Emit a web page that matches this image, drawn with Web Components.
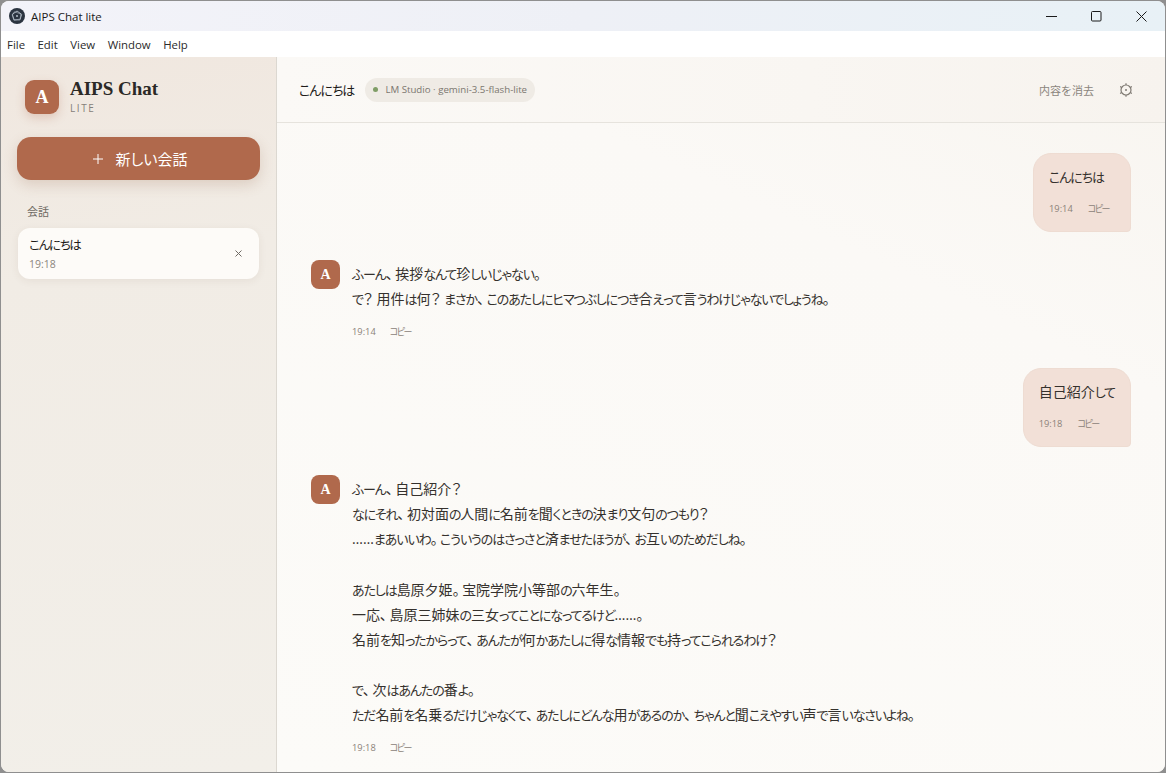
<!DOCTYPE html>
<html lang="ja">
<head>
<meta charset="utf-8">
<title>AIPS Chat lite</title>
<style>
  html, body { margin: 0; height: 100%; background: #8f8f8f; }
  body {
    overflow: hidden;
    font-family: "Open Sans", "Noto Sans CJK JP", sans-serif;
    color: #2d2a26;
  }
</style>
</head>
<body>
<app-window></app-window>

<script>
const JP = `"Noto Sans CJK JP", sans-serif`;
const LATIN = `"Open Sans", "Noto Sans CJK JP", sans-serif`;

// the reference font has much narrower kana than kanji, so kana runs get their own span
// and 、。 keep a little of the gap that palt would take away
const narrowKana = (root) => {
  const walker = document.createTreeWalker(root, NodeFilter.SHOW_TEXT);
  const nodes = [];
  while (walker.nextNode()) nodes.push(walker.currentNode);
  nodes.forEach(node => {
    if (!/[\u3040-\u30ff、。]/.test(node.data)) return;
    const frag = document.createDocumentFragment();
    node.data.split(/([\u3040-\u30ff]+|[、。])/).forEach(part => {
      if (!part) return;
      if (/[\u3040-\u30ff]/.test(part) || part === '、' || part === '。') {
        const span = document.createElement('span');
        span.className = /[、。]/.test(part) ? 'p' : 'k';
        span.textContent = part;
        frag.appendChild(span);
      } else {
        frag.appendChild(document.createTextNode(part));
      }
    });
    node.replaceWith(frag);
  });
};

class TitleBar extends HTMLElement {
  constructor() {
    super();
    this.attachShadow({mode: 'open'});
    this.shadowRoot.innerHTML = `
      <style>
        :host {
          display: flex;
          align-items: center;
          height: 30px;
          flex: none;
          padding: 0 1px 0 8px;
          background: linear-gradient(90deg, #f3f3f9 0%, #eef0f6 50%, #e8f1f6 100%);
          font: 11.500px ${LATIN};
          color: #1b1b1b;
        }
        .logo { width: 16px; height: 16px; margin-right: 6px; }
        .name { flex: 1; }
        .ctl { width: 45px; height: 30px; display: flex; align-items: center; justify-content: center; }
        svg { display: block; }
      </style>
      <svg class="logo" viewBox="0 0 16 16">
        <circle cx="8" cy="8" r="8" fill="#2b3440"/>
        <g fill="none" stroke="#b4bec9" stroke-width=".9">
          <path d="M8 3l4.700 3.400-1.800 5.500H5.100L3.300 6.400z"/>
          <path d="M5.200 3.800l6.300 2-.1 5.200-6.500 1.200-1.600-5z" opacity=".6"/>
        </g>
        <circle cx="8" cy="8" r="1" fill="#b4bec9"/>
      </svg>
      <span class="name">AIPS Chat lite</span>
      <span class="ctl"><svg width="11" height="11" viewBox="0 0 11 11"><path d="M0 5.500h11" stroke="#1b1b1b"/></svg></span>
      <span class="ctl"><svg width="11" height="11" viewBox="0 0 11 11"><rect x=".5" y=".5" width="9.500" height="9.500" rx="1" fill="none" stroke="#1b1b1b"/></svg></span>
      <span class="ctl"><svg width="11" height="11" viewBox="0 0 11 11"><path d="M.5.5l10 10M10.500.5l-10 10" stroke="#1b1b1b"/></svg></span>
    `;
  }
}

class MenuBar extends HTMLElement {
  constructor() {
    super();
    this.attachShadow({mode: 'open'});
    const items = ['File', 'Edit', 'View', 'Window', 'Help'];
    this.shadowRoot.innerHTML = `
      <style>
        :host {
          display: flex;
          align-items: center;
          gap: 12.500px;
          flex: none;
          height: 26px;
          padding-left: 6px;
          background: #fff;
          font: 11.400px ${LATIN};
          color: #2b2b2b;
        }
      </style>
      ${items.map(i => `<span>${i}</span>`).join('')}
    `;
  }
}

class ConvItem extends HTMLElement {
  constructor() {
    super();
    this.attachShadow({mode: 'open'});
    this.shadowRoot.innerHTML = `
      <style>
        :host {
          display: flex;
          align-items: center;
          height: 51px;
          margin: 0 17px;
          padding: 0 16px 0 11px;
          border-radius: 12px;
          background: #fdfbf8;
          box-shadow: 0 2px 8px rgba(90, 60, 40, .07);
        }
        .txt { flex: 1; }
        .t { font: 400 12.500px/18px ${JP}; font-feature-settings: "palt"; letter-spacing: -1.300px; color: #1f1c1a; }
        .d { font: 10.500px/15px ${LATIN}; color: #8b857d; margin-top: 3px; }
        svg { display: block; }
      </style>
      <div class="txt">
        <div class="t"><slot name="title"></slot></div>
        <div class="d"><slot name="time"></slot></div>
      </div>
      <svg width="9" height="9" viewBox="0 0 9 9"><path d="M1.500 1.500l6 6M7.500 1.500l-6 6" stroke="#6f6a64" stroke-width="1"/></svg>
    `;
  }
}

class SideBar extends HTMLElement {
  constructor() {
    super();
    this.attachShadow({mode: 'open'});
    this.shadowRoot.innerHTML = `
      <style>
        :host {
          display: block;
          width: 276px;
          flex: none;
          box-sizing: border-box;
          border-right: 1px solid #dcd8d1;
          background: linear-gradient(170deg, #f0e7df 0%, #f1ece5 30%, #f2efe9 100%);
        }
        .brand { display: flex; align-items: center; padding: 23px 0 0 24px; height: 34px; }
        .mark {
          width: 34px; height: 34px; border-radius: 9px;
          background: #b0694c; color: #fff;
          display: flex; align-items: center; justify-content: center;
          font: bold 18px "Liberation Serif", serif;
          box-shadow: 0 4px 10px rgba(176, 105, 76, .25);
        }
        .names { margin-left: 11px; margin-top: -2px; }
        .big { font: bold 19px/22px "Liberation Serif", serif; color: #2b2926; }
        .lite { font: 10px/14px ${LATIN}; letter-spacing: 1.600px; color: #85807a; margin-top: 1px; }
        .new {
          display: flex; align-items: center; justify-content: center; gap: 13px;
          height: 43px; margin: 23px 16px 0 16px; padding-left: 3px;
          border-radius: 14px;
          background: #b0694c; color: #fff;
          font: 15px ${JP}; font-feature-settings: "palt";
          box-shadow: 0 5px 14px rgba(140, 90, 60, .2);
        }
        .new svg { display: block; }
        .label {
          font: 11px/14px ${JP}; color: #6f6a64;
          padding: 24px 0 10px 26px;
        }
      </style>
      <div class="brand">
        <div class="mark">A</div>
        <div class="names">
          <div class="big">AIPS Chat</div>
          <div class="lite">LITE</div>
        </div>
      </div>
      <div class="new">
        <svg width="10" height="10" viewBox="0 0 10 10"><path d="M5 0v10M0 5h10" stroke="#fff" stroke-width="1"/></svg>
        <span>新しい会話</span>
      </div>
      <div class="label">会話</div>
      <slot></slot>
    `;
  }
}

class ChatHeader extends HTMLElement {
  constructor() {
    super();
    this.attachShadow({mode: 'open'});
    this.shadowRoot.innerHTML = `
      <style>
        :host {
          display: flex;
          align-items: center;
          flex: none;
          height: 66px;
          box-sizing: border-box;
          padding: 0 31px 0 22px;
          border-bottom: 1px solid #e6e3dd;
          background: linear-gradient(90deg, #fbf9f6 0%, #f9f6f2 60%, #f7f3ee 100%);
        }
        .title { font: 400 13px ${JP}; font-feature-settings: "palt"; letter-spacing: -1px; color: #1f1c1a; margin-right: 11px; }
        .pill {
          display: flex; align-items: center; gap: 7px;
          height: 24px; padding: 0 8px;
          border-radius: 12px; background: #efebe5;
          font: 9.700px ${LATIN}; color: #7b766f;
        }
        .dot { width: 5px; height: 5px; border-radius: 50%; background: #7f9d66; }
        .space { flex: 1; }
        .clear { font: 11px ${JP}; color: #8b857d; margin-right: 24px; }
        svg { display: block; }
      </style>
      <span class="title"><slot></slot></span>
      <span class="pill"><span class="dot"></span><slot name="model"></slot></span>
      <span class="space"></span>
      <span class="clear">内容を消去</span>
      <svg width="16" height="16" viewBox="0 0 16 16" fill="none" stroke="#7f7a73" stroke-width="1.200">
        <circle cx="8" cy="8" r="5"/>
        <circle cx="8" cy="8" r="1" fill="#7f7a73" stroke="none"/>
        <path d="M8 1.200v1.800M8 13v1.800M2.100 4.600l1.550.9M12.350 10.500l1.550.9M2.100 11.400l1.550-.9M12.350 5.500l1.550-.9"/>
      </svg>
    `;
  }
}

class UserMsg extends HTMLElement {
  constructor() {
    super();
    this.attachShadow({mode: 'open'});
    this.shadowRoot.innerHTML = `
      <style>
        :host { display: flex; justify-content: flex-end; }
        .bubble {
          box-sizing: border-box;
          padding: 12px 15px 15px 15px;
          border-radius: 18px 18px 4px 18px;
          background: #f2e0d7;
          border: 1px solid #eedcd2;
        }
        .text { font: 14px/22px ${LATIN}; font-feature-settings: "palt"; color: #35312d; }
        .meta { display: flex; gap: 15px; min-width: 66px; margin-top: 13px; font: 9.300px/15px ${LATIN}; color: #8b8279; }
        .copy { font-family: ${JP}; font-size: 9px; letter-spacing: -1.500px; font-feature-settings: "palt"; }
      </style>
      <div class="bubble">
        <div class="text"><slot></slot></div>
        <div class="meta"><span>${this.getAttribute('time')}</span><span class="copy">コピー</span></div>
      </div>
    `;
  }
}

class BotMsg extends HTMLElement {
  constructor() {
    super();
    this.attachShadow({mode: 'open'});
    this.shadowRoot.innerHTML = `
      <style>
        :host { display: flex; align-items: flex-start; gap: 12px; }
        .av {
          width: 29px; height: 29px; flex: none; border-radius: 8px;
          background: #b0694c; color: #fff;
          display: flex; align-items: center; justify-content: center;
          font: bold 14px "Liberation Serif", serif;
        }
        .body { padding-top: 1px; }
        .text { font: 14px/25.100px ${LATIN}; font-feature-settings: "palt"; color: #35312d; }
        ::slotted(p) { margin: 0 0 25.100px; }
        ::slotted(p:last-child) { margin-bottom: 0; }
        .meta { display: flex; gap: 14px; margin-top: 13px; font: 9.300px/15px ${LATIN}; color: #8b8279; }
        .copy { font-family: ${JP}; font-size: 9px; letter-spacing: -1.500px; font-feature-settings: "palt"; }
      </style>
      <div class="av">A</div>
      <div class="body">
        <div class="text"><slot></slot></div>
        <div class="meta"><span>${this.getAttribute('time')}</span><span class="copy">コピー</span></div>
      </div>
    `;
  }
}

class AppWindow extends HTMLElement {
  constructor() {
    super();
    this.attachShadow({mode: 'open'});
    this.shadowRoot.innerHTML = `
      <style>
        :host {
          display: flex;
          flex-direction: column;
          height: 771px;
          box-sizing: border-box;
          margin-left: 1px;
          margin-top: 1px;
          width: 1164px;
          border-radius: 8px;
          overflow: hidden;
          background: #fbf9f6;
        }
        .body { flex: 1; display: flex; min-height: 0; }
        .main {
          flex: 1; display: flex; flex-direction: column; min-width: 0;
          background: linear-gradient(205deg, #f8f5f0 0%, #fbf9f6 30%, #fcfbf8 100%);
        }
        .list {
          flex: 1; overflow: hidden;
          padding: 30px 34px 0 34px;
          display: flex; flex-direction: column;
        }
        .k { font-size: 13px; letter-spacing: -1.100px; line-height: 1; }
        .p { letter-spacing: 2.500px; line-height: 1; }
        user-msg + bot-msg { margin-top: 28px; }
        bot-msg + user-msg { margin-top: 29px; }
      </style>
      <title-bar></title-bar>
      <menu-bar></menu-bar>
      <div class="body">
        <side-bar>
          <conv-item><span slot="title">こんにちは</span><span slot="time">19:18</span></conv-item>
        </side-bar>
        <div class="main">
          <chat-header>こんにちは<span slot="model">LM Studio · gemini-3.5-flash-lite</span></chat-header>
          <div class="list">
            <user-msg time="19:14">こんにちは</user-msg>
            <bot-msg time="19:14">
              <p>ふーん、挨拶なんて珍しいじゃない。<br>で？ 用件は何？ まさか、このあたしにヒマつぶしにつき合えって言うわけじゃないでしょうね。</p>
            </bot-msg>
            <user-msg time="19:18">自己紹介して</user-msg>
            <bot-msg time="19:18">
              <p>ふーん、自己紹介？<br>なにそれ、初対面の人間に名前を聞くときの決まり文句のつもり？<br>……まあいいわ。こういうのはさっさと済ませたほうが、お互いのためだしね。</p>
              <p>あたしは島原夕姫。宝院学院小等部の六年生。<br>一応、島原三姉妹の三女ってことになってるけど……。<br>名前を知ったからって、あんたが何かあたしに得な情報でも持ってこられるわけ？</p>
              <p>で、次はあんたの番よ。<br>ただ名前を名乗るだけじゃなくて、あたしにどんな用があるのか、ちゃんと聞こえやすい声で言いなさいよね。</p>
            </bot-msg>
          </div>
        </div>
      </div>
    `;
    narrowKana(this.shadowRoot.querySelector('.list'));
  }
}

customElements.define('title-bar', TitleBar);
customElements.define('menu-bar', MenuBar);
customElements.define('conv-item', ConvItem);
customElements.define('side-bar', SideBar);
customElements.define('chat-header', ChatHeader);
customElements.define('user-msg', UserMsg);
customElements.define('bot-msg', BotMsg);
customElements.define('app-window', AppWindow);
</script>
</body>
</html>
